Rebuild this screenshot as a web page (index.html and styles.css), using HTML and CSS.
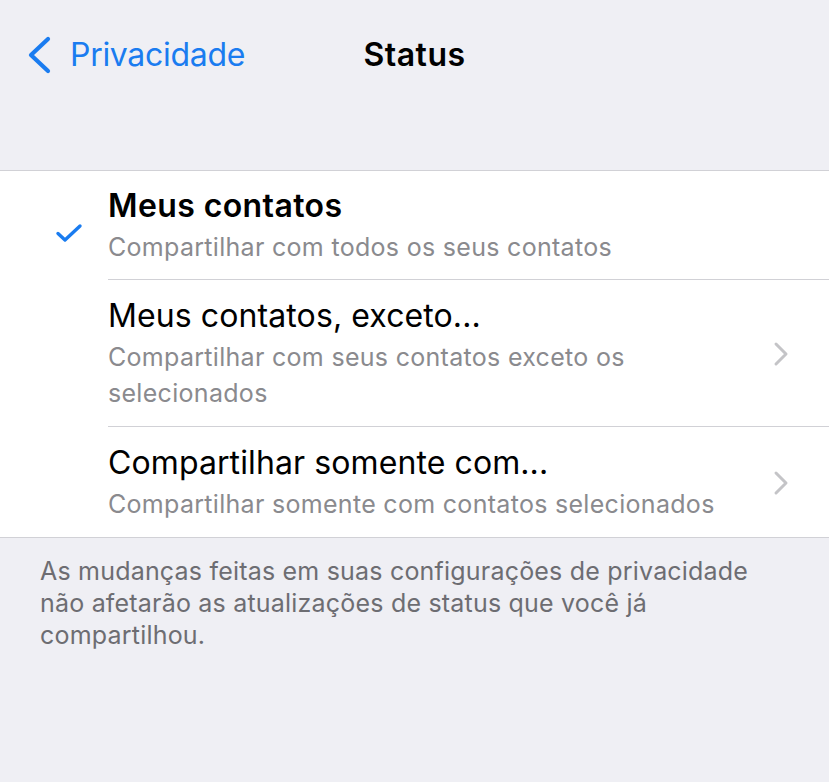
FILE: index.html
```html
<!DOCTYPE html>
<html lang="pt">
<head>
  <meta charset="UTF-8" />
  <meta name="viewport" content="width=device-width, initial-scale=1.0" />
  <title>Status</title>
  <link rel="stylesheet" href="styles.css">
</head>
<body>
  <header class="navbar">
    <a href="#" class="back">
      <svg class="back-icon" viewBox="0 0 26 40" width="26" height="40">
        <path d="M22 4 L5 20 L22 36" fill="none" stroke="currentColor" stroke-width="4.2" stroke-linecap="round" stroke-linejoin="round"/>
      </svg>
      <span>Privacidade</span>
    </a>
    <h1>Status</h1>
  </header>

  <section class="list">
    <div class="row">
      <div class="mark">
        <svg viewBox="0 0 28 22" width="28" height="22">
          <path d="M3 11.5 L10 18 L25 4" fill="none" stroke="currentColor" stroke-width="3.4" stroke-linecap="round" stroke-linejoin="round"/>
        </svg>
      </div>
      <div class="row-body">
        <div class="row-text">
          <h3 class="selected">Meus contatos</h3>
          <p>Compartilhar com todos os seus contatos</p>
        </div>
      </div>
    </div>
    <div class="row">
      <div class="mark"></div>
      <div class="row-body">
        <div class="row-text">
          <h3>Meus contatos, exceto...</h3>
          <p>Compartilhar com seus contatos exceto os selecionados</p>
        </div>
        <svg class="chevron" viewBox="0 0 16 26" width="16" height="26">
          <path d="M3 3 L13 13 L3 23" fill="none" stroke="currentColor" stroke-width="3" stroke-linecap="round" stroke-linejoin="round"/>
        </svg>
      </div>
    </div>
    <div class="row">
      <div class="mark"></div>
      <div class="row-body">
        <div class="row-text">
          <h3>Compartilhar somente com...</h3>
          <p>Compartilhar somente com contatos selecionados</p>
        </div>
        <svg class="chevron" viewBox="0 0 16 26" width="16" height="26">
          <path d="M3 3 L13 13 L3 23" fill="none" stroke="currentColor" stroke-width="3" stroke-linecap="round" stroke-linejoin="round"/>
        </svg>
      </div>
    </div>
  </section>

  <p class="footnote">As mudanças feitas em suas configurações de privacidade não afetarão as atualizações de status que você já compartilhou.</p>
</body>
</html>
```

FILE: styles.css
```css
:root {
  --bg: #efeff4;
  --blue: #1a7cf0;
  --gray: #8a8a8e;
  --line: #d1d1d6;
}
* {
  margin: 0; padding: 0; box-sizing: border-box;
  font-family: Inter, "Noto Sans", sans-serif;
}
body {
  background: var(--bg);
  color: #000;
  width: 829px;
  height: 782px;
  overflow: hidden;
}
.navbar {
  position: relative;
  height: 110px;
  display: flex;
  align-items: flex-start;
  padding: 35px 0 0 26px;
}
.back {
  display: flex;
  align-items: center;
  gap: 18px;
  color: var(--blue);
  text-decoration: none;
  font-size: 32px;
  line-height: 40px;
  letter-spacing: -0.3px;
}
.back-icon { display: block; }
.navbar h1 {
  position: absolute;
  left: 0; right: 0;
  top: 35px;
  text-align: center;
  font-size: 32px;
  font-weight: 600;
  line-height: 40px;
  letter-spacing: 0.5px;
  pointer-events: none;
}
.list {
  margin-top: 60px;
  background: #fff;
  border-top: 1px solid var(--line);
  border-bottom: 1px solid var(--line);
}
.row { display: flex; }
.mark {
  width: 108px;
  flex-shrink: 0;
  color: var(--blue);
  display: flex;
  align-items: center;
  padding-left: 55px;
  padding-top: 14px;
}
.mark svg { display: block; }
.row-body {
  flex: 1;
  display: flex;
  align-items: center;
  padding: 17px 40px 15px 0;
  border-bottom: 1px solid var(--line);
}
.row:first-child .row-body { padding-top: 16px; padding-bottom: 14px; }
.row:last-child .row-body { border-bottom: none; }
.row-text { flex: 1; }
.row-text h3 {
  font-size: 32px;
  font-weight: 400;
  line-height: 38px;
  letter-spacing: 0.1px;
}
.row-text h3.selected {
  font-weight: 600;
  letter-spacing: 0.4px;
}
.row-text p {
  font-size: 25px;
  color: var(--gray);
  line-height: 36px;
  margin-top: 4px;
  letter-spacing: 0.3px;
}
.chevron {
  color: #c4c4c7;
  flex-shrink: 0;
  margin-left: 20px;
}
.footnote {
  padding: 17px 40px 0 40px;
  font-size: 25px;
  line-height: 32px;
  letter-spacing: 0.2px;
  color: #6d6d72;
}
```
